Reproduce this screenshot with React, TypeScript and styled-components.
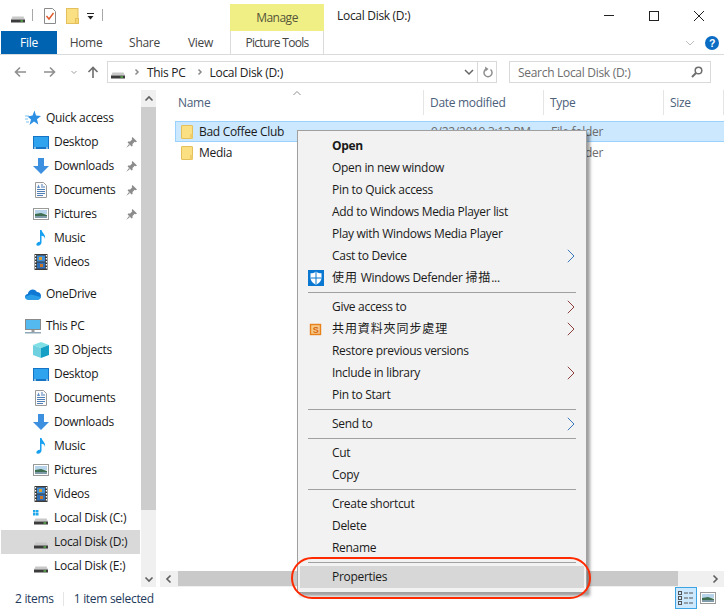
import React from "react";
import styled, { createGlobalStyle } from "styled-components";

const Global = createGlobalStyle`
  html, body { margin: 0; padding: 0; background: #fff; }
  body { font-family: "Open Sans", "Noto Sans CJK TC", sans-serif; font-size: 12px; color: #1a1a1a; letter-spacing: -0.3px; }
  svg { display: block; flex: none; }
`;

const Window = styled.div`
  position: relative; width: 724px; height: 611px; overflow: hidden;
  display: flex; flex-direction: column; background: #fff;
`;
const TitleBar = styled.div`display: flex; align-items: flex-end; height: 31px; flex: none;`;
const Quick = styled.div`
  display: flex; align-items: center; width: 230px; height: 31px; padding-left: 10px; box-sizing: border-box;
`;
const QuickSep = styled.div<{ $ml: number }>`width: 1px; height: 12px; background: #a8a8a8; margin-left: ${p => p.$ml}px; margin-top: -2px;`;
const QuickIcon = styled.div<{ $ml: number }>`margin-left: ${p => p.$ml}px; margin-top: 1px;`;
const ManageTab = styled.div`
  width: 94px; height: 27px; background: #f0ef85; color: #55553a; display: flex; align-items: center; justify-content: center; padding-bottom: 1px; box-sizing: border-box; letter-spacing: -0.5px;
`;
const Title = styled.div`margin-left: 13px; width: 265px; height: 31px; line-height: 32px; color: #222;`;
const WinControls = styled.div`display: flex; align-items: center; height: 31px;`;
const WinBtn = styled.div<{ $w: number }>`width: ${p => p.$w}px; display: flex; justify-content: center;`;

const Ribbon = styled.div`
  display: flex; height: 24px; flex: none; box-sizing: border-box; border-bottom: 1px solid #dadbdc; padding-left: 1px; align-items: stretch;
`;
const FileTab = styled.div`width: 56px; height: 23px; background: #0063b1; color: #fff; text-align: center; line-height: 23px;`;
const RibbonTab = styled.div<{ $w: number }>`width: ${p => p.$w}px; text-align: center; line-height: 23px; color: #444;`;
const ToolsTab = styled.div`
  width: 94px; height: 23px; box-sizing: border-box; border: 1px solid #dadbdc; border-width: 0 1px; text-align: center; line-height: 23px; color: #444; background: #fff; margin-left: 3px; margin-right: 351px; letter-spacing: -0.7px;
`;
const HelpWrap = styled.div`display: flex; align-items: center; gap: 10px; margin-left: 10px;`;

const AddressRow = styled.div`display: flex; align-items: center; height: 35px; flex: none; padding-bottom: 1px; box-sizing: border-box;`;
const NavIcons = styled.div`display: flex; align-items: center; width: 107px; padding-left: 14px; box-sizing: border-box;`;
const NavSlot = styled.div<{ $ml: number }>`margin-left: ${p => p.$ml}px;`;
const AddressBox = styled.div`
  width: 390px; height: 22px; box-sizing: border-box; border: 1px solid #d9d9d9; display: flex; align-items: center; padding-left: 2px; color: #222;
`;
const Crumb = styled.span`margin-left: 5px;`;
const CrumbGap = styled.div<{ $ml: number }>`margin-left: ${p => p.$ml}px;`;
const AddressEnd = styled.div`margin-left: auto; display: flex; align-items: center; height: 20px;`;
const AddressDivider = styled.div`width: 1px; height: 20px; background: #d9d9d9; margin: 0 5px 0 3px;`;
const RefreshSlot = styled.div`margin-right: 3px;`;
const SearchBox = styled.div`
  margin-left: 12px; width: 202px; height: 22px; box-sizing: border-box; border: 1px solid #d9d9d9; display: flex; align-items: center; justify-content: space-between; padding: 0 7px 0 8px; color: #6d6d6d;
`;

const Main = styled.div`display: flex; height: 497px; flex: none;`;
const Sidebar = styled.div`width: 141px; flex: none; padding-top: 16px; box-sizing: border-box; padding-left: 1px;`;
const NavItem = styled.div<{ $level: number; $sel?: boolean; $gap?: boolean }>`
  display: flex; align-items: center; height: 24px; width: 139px; box-sizing: border-box;
  padding-left: ${p => (p.$level === 1 ? 24 : 32)}px; margin-top: ${p => (p.$gap ? 8 : 0)}px;
  background: ${p => (p.$sel ? "#d9d9d9" : "transparent")};
`;
const NavText = styled.span`margin-left: 5px; flex: 1; white-space: nowrap; color: #1a1a1a; padding-bottom: 2px;`;
const PinSlot = styled.div`margin-right: 3px;`;

const VScroll = styled.div`width: 15px; flex: none; background: #f0f0f0; display: flex; flex-direction: column; align-items: stretch;`;
const ScrollArrow = styled.div`height: 17px; flex: none; display: flex; align-items: center; justify-content: center;`;
const VThumb = styled.div`height: 403px; background: #cdcdcd; flex: none;`;
const VRest = styled.div`flex: 1;`;

const Content = styled.div`margin-left: 4px; flex: 1; display: flex; flex-direction: column; min-width: 0; position: relative;`;
const HeaderRow = styled.div`display: grid; grid-template-columns: 264px 120px 120px 1fr; height: 25px; flex: none; color: #4c607a;`;
const HeaderCell = styled.div<{ $first?: boolean }>`
  display: flex; align-items: center; height: 25px; box-sizing: border-box; padding-left: ${p => (p.$first ? 18 : 6)}px; border-right: 1px solid #e5e5e5; white-space: nowrap; padding-bottom: 1px;
`;
const SortCaret = styled.div`position: absolute; left: 132px; top: -1px;`;
const Rows = styled.div`flex: 1; padding-top: 6px; padding-left: 15px;`;
const FileRow = styled.div<{ $sel?: boolean }>`
  display: grid; grid-template-columns: 248px 120px 120px 1fr; height: 21px; box-sizing: border-box; align-items: center;
  background: ${p => (p.$sel ? "#cce8ff" : "transparent")}; border: 1px solid ${p => (p.$sel ? "#99d1ff" : "transparent")}; border-right: 0;
`;
const FileName = styled.div`display: flex; align-items: center; gap: 6px; padding-left: 5px; white-space: nowrap; color: #1a1a1a;`;
const FileLabel = styled.span`padding-bottom: 1px;`;
const FileMeta = styled.div`padding-left: 7px; color: #6d6d6d; white-space: nowrap; padding-bottom: 1px;`;
const HScroll = styled.div`height: 16px; flex: none; display: flex; background: #f0f0f0; align-items: flex-start;`;
const HArrow = styled.div`width: 18px; height: 16px; display: flex; align-items: center; justify-content: center; flex: none;`;
const HThumb = styled.div`width: 500px; height: 15px; background: #c9c9c9; flex: none;`;
const HRest = styled.div`flex: 1;`;

const Status = styled.div`display: flex; align-items: center; flex: 1; padding-left: 15px; color: #1e395b;`;
const StatusText = styled.span`padding-bottom: 2px;`;
const StatusSep = styled.div`width: 1px; height: 14px; background: #e5e5e5; margin: 0 10px 0 9px;`;
const ViewIcons = styled.div`margin-left: auto; display: flex; align-items: center; margin-right: 5px; margin-bottom: 2px; height: 22px;`;
const ViewBtn = styled.div<{ $on?: boolean }>`
  width: 22px; height: 22px; box-sizing: border-box; display: flex; align-items: center; justify-content: center;
  background: ${p => (p.$on ? "#cce8ff" : "transparent")}; border: 1px solid ${p => (p.$on ? "#3ea5e4" : "transparent")};
`;

const Menu = styled.div`
  position: absolute; left: 297px; top: 130px; width: 290px; height: 463px; box-sizing: border-box; padding: 4px 2px 0 2px;
  background: #f2f2f2; border: 1px solid #a0a0a0; box-shadow: 3px 3px 3px rgba(0,0,0,.38);
`;
const MenuItem = styled.div<{ $bold?: boolean; $hover?: boolean }>`
  position: relative; height: 22px; display: flex; align-items: center; padding: 0 0 2px 32px; box-sizing: border-box; color: #1a1a1a; white-space: nowrap;
  font-weight: ${p => (p.$bold ? 700 : 400)}; background: ${p => (p.$hover ? "#d7d7d7" : "transparent")};
`;
const MenuLabel = styled.span`white-space: pre;`;
const Cjk = styled.span`letter-spacing: 0.9px;`;
const MenuGlyph = styled.div`position: absolute; left: 8px; top: 3px;`;
const MenuArrow = styled.div`position: absolute; right: 9px; top: 4px;`;
const MenuSep = styled.div`height: 1px; background: #a0a0a0; margin: 3px 8px;`;
const Highlight = styled.div`
  position: absolute; left: 291px; top: 557px; width: 300px; height: 42px; box-sizing: border-box; border: 2px solid #ff2a00; border-radius: 21px; pointer-events: none;
`;

const Drive = ({ win }: { win?: boolean }) => (
  <svg width="16" height="16" viewBox="0 0 16 16">
    {win && <g fill="#1ea7e8"><rect x="0" y="0" width="2.5" height="2.5" /><rect x="3" y="0" width="2.5" height="2.5" /><rect x="0" y="3" width="2.5" height="2.5" /><rect x="3" y="3" width="2.5" height="2.5" /></g>}
    <path d="M2.5 8.5 L13.5 8.5 L15 11.5 L1 11.5 Z" fill="#c8c8c8" />
    <rect x="1" y="11.5" width="14" height="3" fill="#3c3c3c" />
    <rect x="10.5" y="12.4" width="2.5" height="1.2" fill="#5ed04c" />
  </svg>
);
const Folder = () => (
  <svg width="12" height="14" viewBox="0 0 12 14">
    <rect x=".5" y=".5" width="11" height="13" rx=".5" fill="#fbdf83" stroke="#e3c05c" />
    <rect x="9" y="9" width="2.5" height="4.5" fill="#f0cd6a" />
  </svg>
);
const BigFolder = () => (
  <svg width="13" height="16" viewBox="0 0 13 16">
    <rect x=".5" y=".5" width="11.5" height="15" fill="#fbdf83" stroke="#e3c05c" />
    <rect x="9.5" y="10.5" width="3" height="5" fill="#f6d472" stroke="#e3c05c" />
  </svg>
);
const Desktop = () => (
  <svg width="16" height="13" viewBox="0 0 16 13">
    <rect x="0" y="0" width="16" height="13" fill="#1574c4" />
    <path d="M1 1 H15 V11 H1 Z" fill="#2fa3ee" />
    <rect x="1" y="11.5" width="2" height="1" fill="#fff" /><rect x="13" y="11.5" width="2" height="1" fill="#fff" />
  </svg>
);
const DownloadIcon = () => (
  <svg width="16" height="16" viewBox="0 0 16 16"><path d="M5 0 H11 V8 H16 L8 16 L0 8 H5 Z" fill="#3d8fe0" /></svg>
);
const DocIcon = () => (
  <svg width="16" height="16" viewBox="0 0 16 16">
    <path d="M2.5 .5 H10.5 L13.5 3.5 V15.5 H2.5 Z" fill="#fafafa" stroke="#9a9a9a" />
    <g stroke="#4f7fb5" strokeWidth="1"><path d="M8 3 H10M8 5 H12M4 7.5 H12M4 9.5 H12M4 11.5 H12M4 13.5 H10" /></g>
    <path d="M4 6 L5.5 2.5 L7 6 Z" fill="#5a8cc4" />
  </svg>
);
const PicIcon = () => (
  <svg width="16" height="14" viewBox="0 0 16 14">
    <rect x=".5" y="1.5" width="15" height="11" fill="#fff" stroke="#9a9a9a" />
    <rect x="2" y="3" width="12" height="4" fill="#b7d4ea" />
    <path d="M2 7 L8 6 L14 8 V11 H2 Z" fill="#3f6f52" />
    <rect x="2" y="9" width="12" height="2" fill="#7f9aa8" />
  </svg>
);
const MusicIcon = () => (
  <svg width="16" height="16" viewBox="0 0 16 16">
    <path d="M7 0 H8.5 C9 3 13 4.5 12 9 C11.8 6.8 10.2 6 8.5 5.8 V12.5 C8.5 14.5 6.5 16 4.8 15.8 C3.2 15.6 3 14 4 13 C5 12 6 11.7 7 11.8 Z" fill="#18a0f0" />
  </svg>
);
const VideoIcon = () => (
  <svg width="16" height="16" viewBox="0 0 16 16">
    <rect x="1.5" y="0" width="13" height="16" fill="#3a3a3a" />
    <g fill="#fff">{[1, 4, 7, 10, 13].map(y => <React.Fragment key={y}><rect x="2" y={y} width="1.2" height="1.5" /><rect x="12.8" y={y} width="1.2" height="1.5" /></React.Fragment>)}</g>
    <rect x="4" y="1.5" width="8" height="6" fill="#3f8fd8" /><rect x="4" y="8.5" width="8" height="6" fill="#2f6fb8" />
    <rect x="6" y="3" width="3" height="3" fill="#d9a030" /><rect x="7" y="10" width="3" height="3" fill="#c8752a" />
  </svg>
);
const CloudIcon = () => (
  <svg width="16" height="11" viewBox="0 0 16 11">
    <path d="M3.5 10.8 C1.2 10.8 0 9.3 0 7.8 C0 6.2 1.1 5 2.8 4.9 C3.3 2.4 5.4 .6 7.8 .6 C9.7 .6 11.1 1.6 11.9 3 C14.2 3 16 4.5 16 6.8 C16 9.2 14.4 10.8 12.5 10.8 Z" fill="#0f78d4" />
    <path d="M3.5 10.8 C1.2 10.8 0 9.3 0 7.8 L6 5.5 L16 8 C15.6 9.6 14.2 10.8 12.5 10.8 Z" fill="#2a9de8" />
  </svg>
);
const PcIcon = () => (
  <svg width="16" height="15" viewBox="0 0 16 15">
    <rect x=".5" y=".5" width="15" height="10" fill="#7fd0f7" stroke="#8a8a8a" />
    <rect x="1" y="1" width="14" height="9" fill="#54b9ee" />
    <rect x="6.5" y="11" width="3" height="2" fill="#9a9a9a" /><rect x="0" y="13" width="16" height="1.5" fill="#8fa8b8" />
  </svg>
);
const CubeIcon = () => (
  <svg width="16" height="16" viewBox="0 0 16 16">
    <path d="M8 0 L16 3 L8 6 L0 3 Z" fill="#7fe0e6" />
    <path d="M0 3 L8 6 V16 L0 13 Z" fill="#6fd0e0" />
    <path d="M16 3 L8 6 V16 L16 13 Z" fill="#149fc4" />
  </svg>
);
const Pin = () => (
  <svg width="11" height="11" viewBox="0 0 11 11">
    <path d="M6.5 0 L11 4.5 L9.8 5.3 L8.7 4.7 L6.5 7 L6.6 9 L5.6 9.5 L1.6 5.4 L2.1 4.4 L4.1 4.5 L6.3 2.3 L5.7 1.2 Z" fill="#8c8c8c" />
    <path d="M3 7 L0 11 L4 8 Z" fill="#8c8c8c" />
  </svg>
);
const MenuChevron = ({ red }: { red?: boolean }) => (
  <svg width="8" height="14" viewBox="0 0 8 14"><path d="M.8 .8 L7 7 L.8 13.2" fill="none" stroke={red ? "#8c4040" : "#3a79b8"} strokeWidth="1" /></svg>
);
const Shield = () => (
  <svg width="16" height="16" viewBox="0 0 16 16">
    <rect width="16" height="16" fill="#0a78d0" />
    <path d="M8 1.5 C6 3 4.5 3.3 2.5 3.3 V8 C2.5 11 5 13.2 8 14.7 C11 13.2 13.5 11 13.5 8 V3.3 C11.5 3.3 10 3 8 1.5 Z" fill="#fff" />
    <path d="M7.5 1.5 H8.5 V14.5 H7.5 Z M2.5 7.5 H13.5 V8.5 H2.5 Z" fill="#0a78d0" />
  </svg>
);
const SyncS = () => (
  <svg width="16" height="16" viewBox="0 0 16 16">
    <rect x="2.5" y="3.5" width="10" height="10" fill="#f5c98a" stroke="#e8811a" strokeWidth="1.4" />
    <text x="7.5" y="12" fontSize="9" fontWeight="700" fontFamily="Liberation Sans" textAnchor="middle" fill="#d9660f">S</text>
  </svg>
);
const Chev = ({ d, c = "#8a8a8a", w = 10, h = 10, sw = 1.5 }: { d: string; c?: string; w?: number; h?: number; sw?: number }) => (
  <svg width={w} height={h} viewBox="0 0 10 10"><path d={d} fill="none" stroke={c} strokeWidth={sw} /></svg>
);
const Arrow = ({ d, c = "#8f8f8f" }: { d: string; c?: string }) => (
  <svg width="12" height="12" viewBox="0 0 12 12"><path d={d} fill="none" stroke={c} strokeWidth="1.6" /></svg>
);

type Kind = "desk" | "down" | "doc" | "pic" | "music" | "video" | "cube" | "drive" | "win" | "star" | "cloud" | "pc";
const StarIcon = () => (
  <svg width="16" height="16" viewBox="0 0 16 16">
    <path d="M9.5 0.5 L11 5.5 L16 6 L12 9.3 L13.3 14.5 L9 11.6 L4.5 15 L6 9.5 L2.5 6.5 L7.5 5.5 Z" fill="#2b8fe4" />
    <path d="M0 6 H4 M0 9 H3 M1 12 H4" stroke="#7cc0f2" strokeWidth="1" />
  </svg>
);
const IconFor = ({ k }: { k: Kind }) => {
  switch (k) {
    case "desk": return <Desktop />;
    case "down": return <DownloadIcon />;
    case "doc": return <DocIcon />;
    case "pic": return <PicIcon />;
    case "music": return <MusicIcon />;
    case "video": return <VideoIcon />;
    case "cube": return <CubeIcon />;
    case "drive": return <Drive />;
    case "win": return <Drive win />;
    case "star": return <StarIcon />;
    case "cloud": return <CloudIcon />;
    default: return <PcIcon />;
  }
};
const NavIconBox = styled.div`width: 16px; height: 16px; display: flex; align-items: center; justify-content: center; flex: none;`;

const nav: { t: string; k: Kind; l: number; pin?: boolean; gap?: boolean; sel?: boolean }[] = [
  { t: "Quick access", k: "star", l: 1 },
  { t: "Desktop", k: "desk", l: 2, pin: true },
  { t: "Downloads", k: "down", l: 2, pin: true },
  { t: "Documents", k: "doc", l: 2, pin: true },
  { t: "Pictures", k: "pic", l: 2, pin: true },
  { t: "Music", k: "music", l: 2 },
  { t: "Videos", k: "video", l: 2 },
  { t: "OneDrive", k: "cloud", l: 1, gap: true },
  { t: "This PC", k: "pc", l: 1, gap: true },
  { t: "3D Objects", k: "cube", l: 2 },
  { t: "Desktop", k: "desk", l: 2 },
  { t: "Documents", k: "doc", l: 2 },
  { t: "Downloads", k: "down", l: 2 },
  { t: "Music", k: "music", l: 2 },
  { t: "Pictures", k: "pic", l: 2 },
  { t: "Videos", k: "video", l: 2 },
  { t: "Local Disk (C:)", k: "win", l: 2 },
  { t: "Local Disk (D:)", k: "drive", l: 2, sel: true },
  { t: "Local Disk (E:)", k: "drive", l: 2 },
];

type MI = { t?: React.ReactNode; bold?: boolean; arrow?: "blue" | "red"; glyph?: "shield" | "sync"; sep?: boolean; hover?: boolean };
const menu: MI[] = [
  { t: "Open", bold: true }, { t: "Open in new window" }, { t: "Pin to Quick access" }, { t: "Add to Windows Media Player list" },
  { t: "Play with Windows Media Player" }, { t: "Cast to Device", arrow: "blue" },
  { t: <><Cjk>使用</Cjk> Windows Defender <Cjk>掃描</Cjk>...</>, glyph: "shield" }, { sep: true },
  { t: "Give access to", arrow: "red" }, { t: <Cjk>共用資料夾同步處理</Cjk>, glyph: "sync", arrow: "red" }, { t: "Restore previous versions" },
  { t: "Include in library", arrow: "red" }, { t: "Pin to Start" }, { sep: true }, { t: "Send to", arrow: "blue" }, { sep: true },
  { t: "Cut" }, { t: "Copy" }, { sep: true }, { t: "Create shortcut" }, { t: "Delete" }, { t: "Rename" }, { sep: true }, { t: "Properties", hover: true },
];

export default function App() {
  return (
    <Window>
      <Global />
      <TitleBar>
        <Quick>
          <Drive />
          <QuickSep $ml={6} />
          <QuickIcon $ml={11}>
            <svg width="12" height="16" viewBox="0 0 12 16"><path d="M.5 .5 H8.5 L11.5 3.5 V15.5 H.5 Z" fill="#fff" stroke="#8a8a8a" /><path d="M2.5 8 L5 11 L9.5 5" fill="none" stroke="#e0572a" strokeWidth="1.4" /></svg>
          </QuickIcon>
          <QuickIcon $ml={10}><BigFolder /></QuickIcon>
          <QuickIcon $ml={8}>
            <svg width="7" height="7" viewBox="0 0 7 7"><rect width="7" height="1" fill="#222" /><path d="M.5 3 H6.5 L3.5 6.5 Z" fill="#222" /></svg>
          </QuickIcon>
          <QuickSep $ml={8} />
        </Quick>
        <ManageTab>Manage</ManageTab>
        <Title>Local Disk (D:)</Title>
        <WinControls>
          <WinBtn $w={14}><svg width="10" height="1" viewBox="0 0 10 1"><rect width="10" height="1" fill="#222" /></svg></WinBtn>
          <WinBtn $w={76}><svg width="10" height="10" viewBox="0 0 10 10"><rect x=".5" y=".5" width="9" height="9" fill="none" stroke="#222" /></svg></WinBtn>
          <WinBtn $w={14}><svg width="10" height="10" viewBox="0 0 10 10"><path d="M0 0 L10 10 M10 0 L0 10" stroke="#222" strokeWidth="1" /></svg></WinBtn>
        </WinControls>
      </TitleBar>
      <Ribbon>
        <FileTab>File</FileTab>
        <RibbonTab $w={58}>Home</RibbonTab>
        <RibbonTab $w={59}>Share</RibbonTab>
        <RibbonTab $w={53}>View</RibbonTab>
        <ToolsTab>Picture Tools</ToolsTab>
        <HelpWrap>
          <Chev d="M1 3 L5 7 L9 3" c="#bdbdbd" sw={1} />
          <svg width="14" height="14" viewBox="0 0 14 14"><circle cx="7" cy="7" r="7" fill="#0b6cc4" /><text x="7" y="11" fontSize="10.5" fontWeight="700" fontFamily="Liberation Sans" textAnchor="middle" fill="#fff">?</text></svg>
        </HelpWrap>
      </Ribbon>
      <AddressRow>
        <NavIcons>
          <Arrow d="M12 6 H1.5 M6 1.5 L1.5 6 L6 10.5" />
          <NavSlot $ml={18}><Arrow d="M0 6 H10.5 M6 1.5 L10.5 6 L6 10.5" /></NavSlot>
          <NavSlot $ml={13}><Chev d="M2.5 4 L5 6.5 L7.5 4" c="#a0a0a0" sw={1} /></NavSlot>
          <NavSlot $ml={8}><Arrow d="M6 12 V1.5 M1.5 6 L6 1.5 L10.5 6" c="#6e6e6e" /></NavSlot>
        </NavIcons>
        <AddressBox>
          <Drive />
          <CrumbGap $ml={6}><Chev d="M3.5 2.5 L6 5 L3.5 7.5" c="#8a8a8a" /></CrumbGap>
          <Crumb>This PC</Crumb>
          <CrumbGap $ml={9}><Chev d="M3.5 2.5 L6 5 L3.5 7.5" c="#8a8a8a" /></CrumbGap>
          <Crumb>Local Disk (D:)</Crumb>
          <AddressEnd>
            <Chev d="M1 3 L5 7 L9 3" c="#666" w={10} h={10} />
            <AddressDivider />
            <RefreshSlot>
              <svg width="10" height="12" viewBox="0 0 10 12"><path d="M7.5 3.5 A4 4 0 1 1 3 3.2" fill="none" stroke="#8f8f8f" strokeWidth="1.5" /><path d="M2 .5 L5.5 3 L2.5 5.5 Z" fill="#8f8f8f" /></svg>
            </RefreshSlot>
          </AddressEnd>
        </AddressBox>
        <SearchBox>
          Search Local Disk (D:)
          <svg width="12" height="12" viewBox="0 0 12 12"><circle cx="7.5" cy="4.5" r="3.3" fill="none" stroke="#6e6e6e" strokeWidth="1.5" /><path d="M5 7 L1 11" stroke="#6e6e6e" strokeWidth="2" /></svg>
        </SearchBox>
      </AddressRow>
      <Main>
        <Sidebar>
          {nav.map((n, i) => (
            <NavItem key={i} $level={n.l} $sel={n.sel} $gap={n.gap}>
              <NavIconBox><IconFor k={n.k} /></NavIconBox>
              <NavText>{n.t}</NavText>
              {n.pin && <PinSlot><Pin /></PinSlot>}
            </NavItem>
          ))}
        </Sidebar>
        <VScroll>
          <ScrollArrow><Chev d="M1.5 6.5 L5 3 L8.5 6.5" c="#5f5f5f" sw={1.6} /></ScrollArrow>
          <VThumb />
          <VRest />
          <ScrollArrow><Chev d="M1.5 3.5 L5 7 L8.5 3.5" c="#5f5f5f" sw={1.6} /></ScrollArrow>
        </VScroll>
        <Content>
          <HeaderRow>
            <HeaderCell $first>Name</HeaderCell>
            <HeaderCell>Date modified</HeaderCell>
            <HeaderCell>Type</HeaderCell>
            <HeaderCell>Size</HeaderCell>
          </HeaderRow>
          <SortCaret><Chev d="M1.5 6 L5 2.5 L8.5 6" c="#8f8f8f" sw={1} /></SortCaret>
          <Rows>
            <FileRow $sel>
              <FileName><Folder /><FileLabel>Bad Coffee Club</FileLabel></FileName>
              <FileMeta>9/22/2019 3:13 PM</FileMeta>
              <FileMeta>File folder</FileMeta>
            </FileRow>
            <FileRow>
              <FileName><Folder /><FileLabel>Media</FileLabel></FileName>
              <FileMeta>9/22/2019 3:13 PM</FileMeta>
              <FileMeta>File folder</FileMeta>
            </FileRow>
          </Rows>
          <HScroll>
            <HArrow><Chev d="M6.5 1.5 L3 5 L6.5 8.5" c="#5f5f5f" sw={1.6} /></HArrow>
            <HThumb />
            <HRest />
            <HArrow><Chev d="M3.5 1.5 L7 5 L3.5 8.5" c="#5f5f5f" sw={1.6} /></HArrow>
          </HScroll>
        </Content>
      </Main>
      <Status>
        <StatusText>2 items</StatusText>
        <StatusSep />
        <StatusText>1 item selected</StatusText>
        <ViewIcons>
          <ViewBtn $on>
            <svg width="16" height="16" viewBox="0 0 16 16"><g fill="none" stroke="#555"><rect x=".5" y="1.5" width="3" height="3" /><rect x=".5" y="6.5" width="3" height="3" /><rect x=".5" y="11.5" width="3" height="3" /></g><path d="M6 3 H10 M11 3 H15 M6 8 H10 M11 8 H15 M6 13 H10 M11 13 H15" stroke="#555" /></svg>
          </ViewBtn>
          <ViewBtn><PicIcon /></ViewBtn>
        </ViewIcons>
      </Status>
      <Menu>
        {menu.map((m, i) => m.sep ? <MenuSep key={i} /> : (
          <MenuItem key={i} $bold={m.bold} $hover={m.hover}>
            {m.glyph === "shield" && <MenuGlyph><Shield /></MenuGlyph>}
            {m.glyph === "sync" && <MenuGlyph><SyncS /></MenuGlyph>}
            <MenuLabel>{m.t}</MenuLabel>
            {m.arrow && <MenuArrow><MenuChevron red={m.arrow === "red"} /></MenuArrow>}
          </MenuItem>
        ))}
      </Menu>
      <Highlight />
    </Window>
  );
}
